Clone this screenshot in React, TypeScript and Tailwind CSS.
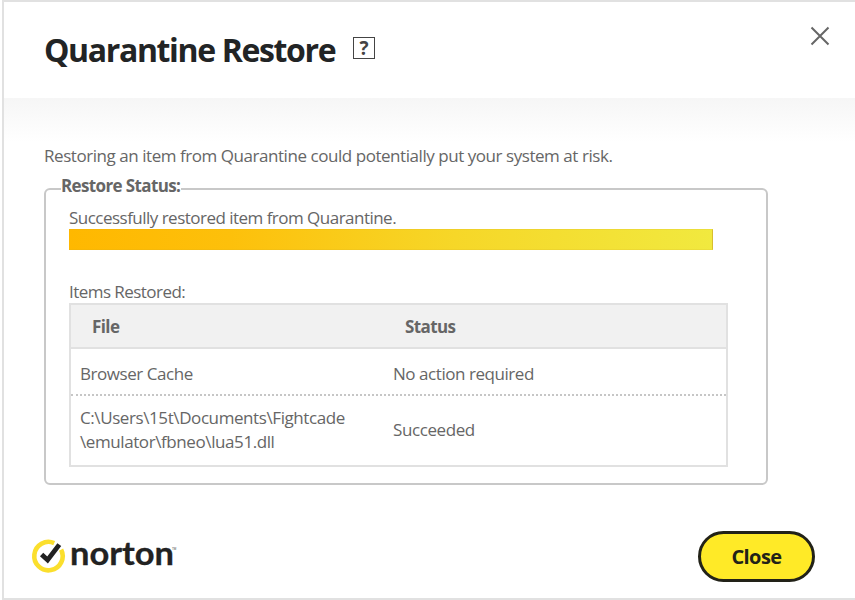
import type { ReactNode } from "react";

interface RestoredItem {
  file: string[];
  status: string;
  rowClass: string;
}

const items: RestoredItem[] = [
  {
    file: ["Browser Cache"],
    status: "No action required",
    rowClass: "h-[47px] border-b-2 border-dotted border-[#c6c6c6] pt-[5px]",
  },
  {
    file: ["C:\\Users\\15t\\Documents\\Fightcade", "\\emulator\\fbneo\\lua51.dll"],
    status: "Succeeded",
    rowClass: "h-[69px] pb-px tracking-[-0.41px]",
  },
];

function NortonLogo() {
  return (
    <svg className="overflow-visible" width="150" height="46" viewBox="0 0 150 46" role="img" aria-label="norton">
      <path d="M22.2 9.1A14.2 14.2 0 1 0 29.1 15.6" fill="none" stroke="#fbdf2d" strokeWidth="4.6" />
      <path d="M9.6 20.4L15.6 26L27.3 10.6" fill="none" stroke="#222" strokeWidth="4.8" />
      <text
        x="38"
        y="31"
        textLength="104"
        lengthAdjust="spacingAndGlyphs"
        fill="#222"
        stroke="#222"
        strokeWidth="0.3"
        fontSize="31.5"
        fontWeight="700"
        letterSpacing="0"
        fontFamily="Lato, sans-serif"
      >
        norton
      </text>
      <text x="140" y="15.5" fill="#444" fontSize="3" letterSpacing="0" fontFamily="Liberation Sans, sans-serif">
        TM
      </text>
    </svg>
  );
}

function Row({ className, children }: { className: string; children: ReactNode }) {
  return <div className={`grid grid-cols-[313px_1fr] items-center ${className}`}>{children}</div>;
}

export default function App() {
  return (
    <div
      className="ml-[2px] flex h-[600px] flex-col overflow-hidden border-y-2 border-l-2 border-[#e1e1e1] bg-white text-[17px] leading-6 tracking-[-0.45px] text-[#666]"
      style={{ fontFamily: '"Open Sans", "Noto Sans", sans-serif' }}
    >
      <header className="flex h-24 shrink-0 justify-between pr-[25px] pl-10">
        <div className="flex items-start pt-7">
          <h1 className="w-[309px] text-[32px] leading-10 font-bold tracking-[-1.36px] whitespace-nowrap text-[#222425]">
            Quarantine Restore
          </h1>
          <button
            className="mt-[7px] flex size-[22px] items-center justify-center border border-[#444] pt-px text-[19px] leading-none font-bold tracking-normal text-[#444]"
            aria-label="Help"
          >
            ?
          </button>
        </div>
        <button className="mt-6 h-5 w-5" aria-label="Close dialog">
          <svg width="20" height="20" viewBox="0 0 20 20" stroke="#666" strokeWidth="2">
            <path d="M1.5 1.5L18.5 18.5M18.5 1.5L1.5 18.5" />
          </svg>
        </button>
      </header>

      <main className="h-[387px] shrink-0 bg-[linear-gradient(#f6f6f6,#fff_44px)] pt-[46px] pl-10">
        <p className="whitespace-nowrap">Restoring an item from Quarantine could potentially put your system at risk.</p>

        <fieldset className="mt-[9px] h-[308px] w-[724px] rounded-md border-2 border-[#c8c8c8] pl-[23px]">
          <legend className="-ml-2 h-6 w-[120px] leading-[18px] font-bold tracking-[-0.63px] whitespace-nowrap">
            Restore Status:
          </legend>
          <p className="mt-[5px] h-[23px] tracking-[-0.52px]">Successfully restored item from Quarantine.</p>
          <div className="h-[21px] w-[644px] border-y border-r border-y-[#c9a227]/15 border-r-[#c9a227]/60 bg-[linear-gradient(90deg,#ffb800,#fdc00b_25%,#f6d728_60%,#f1e93f)] bg-origin-border" />
          <p className="mt-[30px] h-[23px] tracking-[-0.55px]">Items Restored:</p>

          <div className="h-[164px] w-[659px] border-2 border-[#e1e1e1]">
            <Row className="h-11 border-b-2 border-[#e1e1e1] bg-[#f1f1f1] pt-0.5 font-bold tracking-[-0.6px]">
              <span className="pl-[21px]">File</span>
              <span className="pl-[21px]">Status</span>
            </Row>
            {items.map((item) => (
              <Row key={item.status} className={item.rowClass}>
                <div className="pl-[9px] whitespace-nowrap">
                  {item.file.map((line) => (
                    <div key={line}>{line}</div>
                  ))}
                </div>
                <span className="pl-[9px]">{item.status}</span>
              </Row>
            ))}
          </div>
        </fieldset>
      </main>

      <footer className="flex justify-between pt-[46px] pr-10 pl-7">
        <div className="pt-[3px]">
          <NortonLogo />
        </div>
        <button className="h-[51px] w-[117px] rounded-full border-[3px] border-[#222218] bg-[#ffea27] text-[20px] font-bold tracking-[-0.55px] text-[#222218]">
          Close
        </button>
      </footer>
    </div>
  );
}
